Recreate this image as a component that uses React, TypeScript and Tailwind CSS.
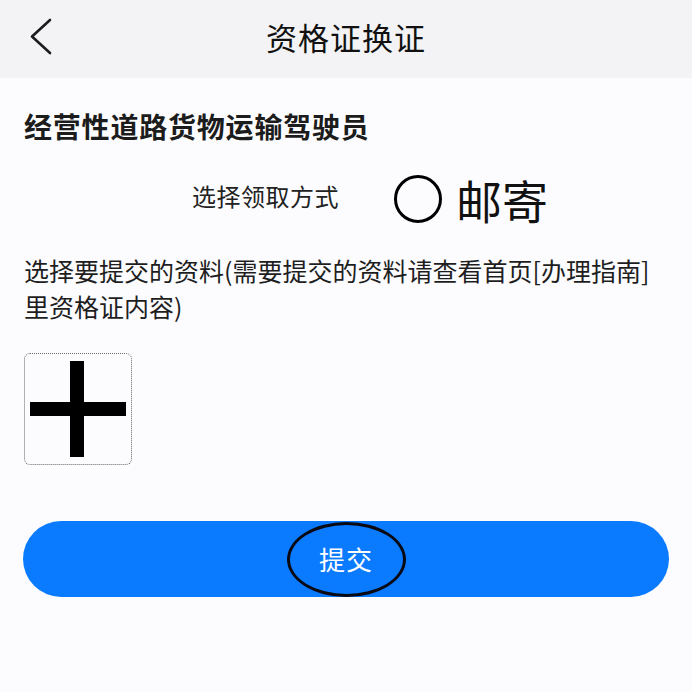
export default function App() {
  return (
    <div
      className="w-[692px] h-[692px] bg-[#fcfcfe] text-[#1c1c1c] overflow-hidden"
      style={{ fontFamily: '"Noto Sans CJK SC", "Noto Sans", sans-serif' }}
    >
      {/* header */}
      <div className="relative h-[78px] bg-[#f3f3f5] flex items-center justify-center">
        <button className="absolute left-[25px] top-[15px] w-[32px] h-[44px] flex items-center justify-center">
          <svg width="32" height="44" viewBox="0 0 32 44" fill="none">
            <path d="M25 5 L7 21.5 L25 38" stroke="#1c1c1c" strokeWidth="2.6" strokeLinecap="round" strokeLinejoin="round" />
          </svg>
        </button>
        <h1 className="text-[31px] leading-none tracking-[1px] -mt-[5px] text-[#111]">资格证换证</h1>
      </div>

      <div className="px-[24px]">
        <h2 className="mt-[32px] text-[28px] leading-[32px] font-bold tracking-[0.8px]">经营性道路货物运输驾驶员</h2>

        <div className="mt-[32px] h-[50px] flex items-center">
          <span className="ml-[168px] -mt-[6px] text-[24px] leading-none tracking-[0.5px] text-[#222]">选择领取方式</span>
          <span className="ml-[55px] w-[48px] h-[48px] rounded-full border-[3px] border-black shrink-0"></span>
          <span className="ml-[14px] text-[46px] leading-none text-[#111]">邮寄</span>
        </div>

        <p className="mt-[28px] text-[25px] leading-[36px] text-[#1e1e1e]">
          选择要提交的资料(需要提交的资料请查看首页[办理指南]里资格证内容)
        </p>

        <div className="mt-[29px] w-[108px] h-[112px] border-[1.5px] border-dotted border-[#666] rounded-[6px] flex items-center justify-center">
          <svg width="96" height="96" viewBox="0 0 96 96">
            <rect x="0" y="41" width="96" height="14" fill="#000" />
            <rect x="40" y="0" width="14" height="96" fill="#000" />
          </svg>
        </div>

        <button className="relative mt-[56px] -ml-[1px] w-[646px] h-[76px] rounded-full bg-[#0a7bff] flex items-center justify-center">
          <span className="text-white text-[26px] leading-none tracking-[1px]">提交</span>
          <span className="absolute left-[264px] top-[1px] w-[119px] h-[75px] rounded-[50%] border-[3px] border-[#0a0a14]"></span>
        </button>
      </div>
    </div>
  );
}
